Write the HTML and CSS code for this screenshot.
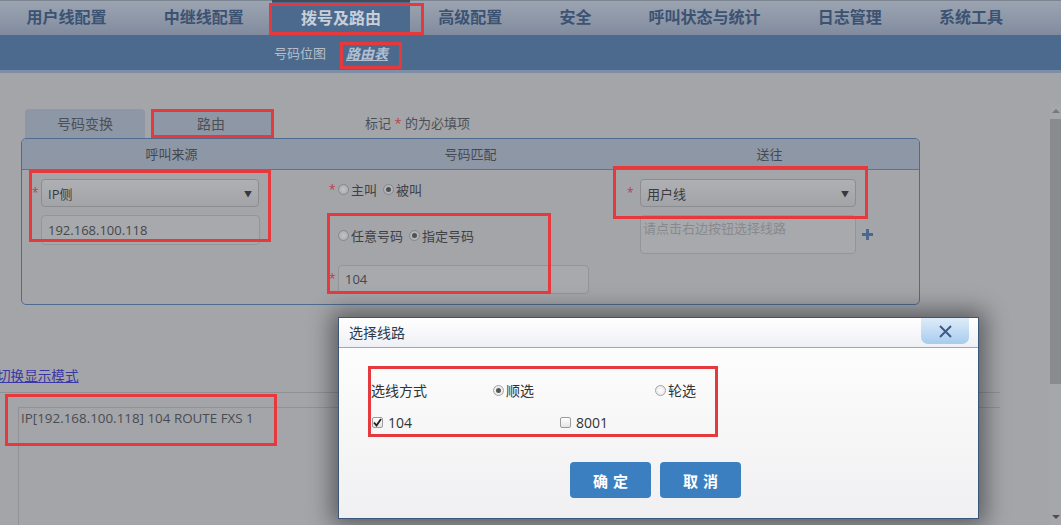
FILE: index.html
```html
<!DOCTYPE html>
<html lang="zh-CN">
<head>
    <meta charset="UTF-8">
    <meta name="viewport" content="width=device-width, initial-scale=1.0">
    <title>拨号及路由 - 路由表</title>
    <link rel="stylesheet" href="styles.css">
</head>
<body>
    <header class="topnav">
        <a class="nav-item">用户线配置</a>
        <a class="nav-item">中继线配置</a>
        <a class="nav-item active">拨号及路由</a>
        <a class="nav-item">高级配置</a>
        <a class="nav-item">安全</a>
        <a class="nav-item">呼叫状态与统计</a>
        <a class="nav-item">日志管理</a>
        <a class="nav-item">系统工具</a>
    </header>
    <nav class="subnav">
        <a class="sub-item">号码位图</a>
        <a class="sub-item current">路由表</a>
    </nav>

    <div class="page">
        <main class="content">
            <div class="tab-row">
                <div class="tab">号码变换</div>
                <div class="tab">路由</div>
                <div class="hint">标记 <span class="req-inline">*</span> 的为必填项</div>
            </div>

            <div class="panel">
                <div class="panel-head">
                    <div>呼叫来源</div>
                    <div>号码匹配</div>
                    <div>送往</div>
                </div>
                <div class="panel-body">
                    <!-- 呼叫来源 -->
                    <div class="col col-src">
                        <div class="field">
                            <span class="req">*</span>
                            <div class="select src-select"><span>IP侧</span><span class="arrow">▼</span></div>
                        </div>
                        <div class="field">
                            <span class="req"></span>
                            <div class="input src-input">192.168.100.118</div>
                        </div>
                    </div>
                    <!-- 号码匹配 -->
                    <div class="col col-match">
                        <div class="field radio-line">
                            <span class="req">*</span>
                            <span class="radio"></span><span class="radio-label">主叫</span>
                            <span class="radio checked"></span><span class="radio-label">被叫</span>
                        </div>
                        <div class="field radio-line second">
                            <span class="req"></span>
                            <span class="radio"></span><span class="radio-label">任意号码</span>
                            <span class="radio checked"></span><span class="radio-label">指定号码</span>
                        </div>
                        <div class="field number-row">
                            <span class="req">*</span>
                            <div class="input num-input">104</div>
                        </div>
                    </div>
                    <!-- 送往 -->
                    <div class="col col-dest">
                        <div class="field">
                            <span class="req">*</span>
                            <div class="select dest-select"><span>用户线</span><span class="arrow">▼</span></div>
                        </div>
                        <div class="field">
                            <span class="req"></span>
                            <div class="textarea">请点击右边按钮选择线路</div>
                            <svg class="plus" width="13" height="13" viewBox="0 0 13 13">
                                <path d="M6.5 1v11M1 6.5h11" stroke="#4a6890" stroke-width="3"/>
                            </svg>
                        </div>
                    </div>
                </div>
            </div>

            <a class="mode-link">切换显示模式</a>
            <div class="route-list">
                <div class="route-box">IP[192.168.100.118] 104 ROUTE FXS 1</div>
            </div>
        </main>

        <div class="scrollbar">
            <div class="scroll-up"></div>
            <div class="scroll-thumb"></div>
            <div class="scroll-track"></div>
            <div class="scroll-down"></div>
        </div>
    </div>

    <!-- 选择线路 dialog -->
    <div class="dialog">
        <div class="dialog-head">
            <div class="dialog-title">选择线路</div>
            <div class="dialog-close">
                <svg width="13" height="13" viewBox="0 0 13 13">
                    <path d="M1 1l11 11M12 1L1 12" stroke="#3c5a88" stroke-width="2"/>
                </svg>
            </div>
        </div>
        <div class="dialog-body">
            <div class="opt-row">
                <span class="opt-label">选线方式</span>
                <span class="opt"><span class="radio light checked"></span>顺选</span>
                <span class="opt"><span class="radio light"></span>轮选</span>
            </div>
            <div class="chk-row">
                <span class="chk">
                    <span class="checkbox">
                        <svg width="9" height="9" viewBox="0 0 9 9"><path d="M1 4.5l2.5 3L8 1" stroke="#222" stroke-width="1.8" fill="none"/></svg>
                    </span>104
                </span>
                <span class="chk"><span class="checkbox"></span>8001</span>
            </div>
            <div class="dialog-buttons">
                <button class="btn">确定</button>
                <button class="btn">取消</button>
            </div>
        </div>
    </div>

    <!-- red annotation frames -->
    <div class="mark mark-nav"></div>
    <div class="mark mark-sub"></div>
    <div class="mark mark-tab"></div>
    <div class="mark mark-src"></div>
    <div class="mark mark-match"></div>
    <div class="mark mark-dest"></div>
    <div class="mark mark-dialog"></div>
    <div class="mark mark-route"></div>
</body>
</html>
```

FILE: styles.css
```css
html, body {
    margin: 0;
    padding: 0;
    height: 525px;
    overflow: hidden;
}
body {
    position: relative;
    font-family: "Open Sans", "Noto Sans CJK SC", sans-serif;
    font-size: 13px;
    color: #3e4045;
    background-color: #a3a5a9;
}

/* top menu */
.topnav {
    display: flex;
    height: 35px;
    box-sizing: border-box;
    border-top: 1px solid #7c8391;
    background: linear-gradient(#9ca4b1, #8d97a7 55%, #808b9e);
}
.nav-item {
    padding: 0 28.6px;
    line-height: 33px;
    font-size: 16px;
    font-weight: bold;
    color: #3c5273;
    white-space: nowrap;
}
.nav-item:first-child {
    margin-left: -2px;
}
.nav-item.active {
    margin-top: -1px;
    border-top: 2px solid #454a56;
    background-color: #4b6a8d;
    color: #c9cfd9;
}
.subnav {
    display: flex;
    align-items: center;
    gap: 20px;
    height: 35px;
    padding-left: 274px;
    background-color: #4b6a8d;
    border-bottom: 3px solid #7d8ea7;
}
.sub-item {
    color: #b6bec9;
    font-size: 13px;
}
.sub-item.current {
    font-size: 14px;
    font-weight: bold;
    font-style: italic;
    text-decoration: underline;
    color: #b3bfd0;
}

/* page */
.page {
    display: flex;
    height: 452px;
}
.content {
    flex: 1;
}
.tab-row {
    display: flex;
    margin-top: 36px;
    margin-left: 25px;
    height: 29px;
}
.tab {
    width: 120px;
    height: 29px;
    line-height: 29px;
    margin-right: 6px;
    text-align: center;
    font-size: 14px;
    color: #4b4f56;
    background-color: #8d97a6;
    border-radius: 4px 4px 0 0;
}
.hint {
    margin-left: 88px;
    line-height: 29px;
    color: #4c4f56;
}
.req-inline {
    color: #b8434a;
}

.panel {
    margin-left: 21px;
    width: 899px;
    height: 167px;
    box-sizing: border-box;
    border: 1px solid #4f6c90;
    border-radius: 5px;
}
.panel-head {
    display: grid;
    grid-template-columns: 1fr 1fr 1fr;
    height: 30px;
    line-height: 30px;
    text-align: center;
    color: #45494f;
    background-color: #8e97a6;
    border-bottom: 1px solid #5a7596;
    border-radius: 4px 4px 0 0;
}
.panel-body {
    display: grid;
    grid-template-columns: 1fr 1fr 1fr;
    padding-top: 9px;
}
.col-src { padding-left: 10px; }
.col-match { padding-left: 8px; }
.col-dest { padding-left: 7px; }

.field {
    display: flex;
    align-items: center;
    margin-bottom: 8px;
}
.req {
    width: 9px;
    flex-shrink: 0;
    color: #b8434a;
    font-size: 12px;
    align-self: flex-start;
    margin-top: 5px;
}
.col-dest .req {
    width: 13px;
}
.select {
    display: flex;
    justify-content: space-between;
    align-items: center;
    height: 28px;
    box-sizing: border-box;
    padding: 0 6px;
    border: 1px solid #8b8d91;
    border-radius: 4px;
    background: linear-gradient(#aeb0b4, #a2a4a8);
    color: #3a3b3e;
}
.arrow {
    font-size: 8px;
    color: #38393c;
}
.src-select { width: 218px; }
.dest-select { width: 216px; }
.input {
    height: 30px;
    line-height: 28px;
    box-sizing: border-box;
    padding: 0 6px;
    border: 1px solid #939599;
    border-radius: 4px;
    background-color: #a7a9ad;
    color: #45474b;
}
.src-input { width: 219px; }
.num-input { width: 251px; height: 29px; line-height: 27px; }
.textarea {
    width: 216px;
    height: 39px;
    box-sizing: border-box;
    padding: 4px 2px;
    line-height: 17px;
    border: 1px solid #939599;
    border-radius: 4px;
    background-color: #a7a9ad;
    color: #88898d;
}
.plus {
    margin-left: 5px;
}

.radio-line {
    height: 20px;
    margin-bottom: 0;
}
.radio-line .req {
    margin-top: 2px;
}
.radio-line.second {
    margin-top: 26px;
}
.number-row {
    margin-top: 20px;
}
.radio {
    display: inline-block;
    position: relative;
    width: 11px;
    height: 11px;
    box-sizing: border-box;
    border: 1px solid #86888c;
    border-radius: 50%;
    background: radial-gradient(#c0c2c5, #a6a8ab);
    margin-right: 2px;
}
.radio.checked::after {
    content: "";
    position: absolute;
    left: 2px;
    top: 2px;
    width: 5px;
    height: 5px;
    border-radius: 50%;
    background-color: #4e5053;
}
.radio-label {
    margin-right: 6px;
    color: #3e4045;
}

.mode-link {
    display: block;
    margin-top: 63px;
    margin-left: -3px;
    line-height: 16px;
    font-size: 13.6px;
    color: #3a37a6;
    text-decoration: underline;
}
.route-list {
    margin-top: 8px;
    margin-right: 50px;
    padding: 14px 0 0 18px;
    border-top: 1px solid #8f9195;
}
.route-box {
    height: 120px;
    padding-left: 2px;
    line-height: 20px;
    font-size: 13.4px;
    color: #4a4c50;
    border-left: 1px solid #909296;
    border-top: 1px solid #909296;
}

/* scrollbar column */
.scrollbar {
    display: flex;
    flex-direction: column;
    width: 11px;
    margin-top: 30px;
    background-color: #a6a7aa;
}
.scroll-up, .scroll-down {
    height: 16px;
    position: relative;
}
.scroll-up::after, .scroll-down::after {
    content: "";
    position: absolute;
    left: 2px;
    border-left: 4px solid transparent;
    border-right: 4px solid transparent;
}
.scroll-up::after {
    top: 6px;
    border-bottom: 4px solid #77787b;
}
.scroll-down::after {
    top: 6px;
    border-top: 4px solid #4d4e50;
}
.scroll-thumb {
    height: 265px;
    background-color: #8a8b8e;
}
.scroll-track {
    flex: 1;
}

/* dialog */
.dialog {
    position: absolute;
    left: 338px;
    top: 317px;
    width: 641px;
    height: 202px;
    box-sizing: border-box;
    border: 1px solid #3d5577;
    background: linear-gradient(#ffffff, #f0f0f2);
    box-shadow: 0 0 22px 6px rgba(0, 0, 0, 0.45);
}
.dialog-head {
    display: flex;
    justify-content: space-between;
    height: 29px;
    padding-left: 10px;
    border-bottom: 1px solid #a3a6ab;
    background: linear-gradient(#ffffff, #eff0f5);
}
.dialog-title {
    line-height: 30px;
    font-size: 14px;
    color: #2e3a4b;
}
.dialog-close {
    display: flex;
    align-items: center;
    justify-content: center;
    width: 48px;
    height: 26px;
    margin-right: 9px;
    border-radius: 0 0 7px 7px;
    background: linear-gradient(#deecf8, #a7ccee);
}
.dialog-body {
    padding: 32px 0 0 32px;
    font-size: 14px;
    color: #333;
}
.opt-row, .chk-row {
    display: flex;
    align-items: center;
    height: 20px;
}
.opt-label { width: 122px; }
.opt {
    display: flex;
    align-items: center;
    width: 162px;
}
.radio.light {
    border-color: #a5a5a5;
    background: radial-gradient(#ffffff, #e2e2e2);
}
.radio.light.checked::after {
    background-color: #555;
}
.chk-row {
    margin-top: 12px;
}
.chk {
    display: flex;
    align-items: center;
    width: 188px;
    font-size: 14px;
}
.checkbox {
    display: flex;
    align-items: center;
    justify-content: center;
    width: 11px;
    height: 11px;
    box-sizing: border-box;
    margin: 0 5px 0 1px;
    border: 1px solid #9c9c9c;
    border-radius: 2px;
    background: linear-gradient(#ffffff, #e4e4e4);
}
.dialog-buttons {
    display: flex;
    gap: 9px;
    margin-top: 30px;
    margin-left: 199px;
}
.btn {
    width: 81px;
    height: 36px;
    padding: 0 0 0 5px;
    border: none;
    border-radius: 4px;
    background-color: #3c7fc1;
    color: #fff;
    font-family: "Noto Sans CJK SC", sans-serif;
    font-size: 15px;
    font-weight: bold;
    letter-spacing: 5px;
}

/* red frames drawn over the screenshot */
.mark {
    position: absolute;
    box-sizing: border-box;
    border: 3px solid #e5393d;
}
.mark-nav { left: 269px; top: 3px; width: 155px; height: 32px; }
.mark-sub { left: 340px; top: 42px; width: 62px; height: 27px; }
.mark-tab { left: 151px; top: 109px; width: 123px; height: 29px; }
.mark-src { left: 29px; top: 170px; width: 242px; height: 72px; }
.mark-match { left: 327px; top: 213px; width: 224px; height: 81px; }
.mark-dest { left: 613px; top: 166px; width: 255px; height: 53px; }
.mark-dialog { left: 368px; top: 366px; width: 350px; height: 71px; }
.mark-route { left: 5px; top: 394px; width: 272px; height: 52px; }
```
